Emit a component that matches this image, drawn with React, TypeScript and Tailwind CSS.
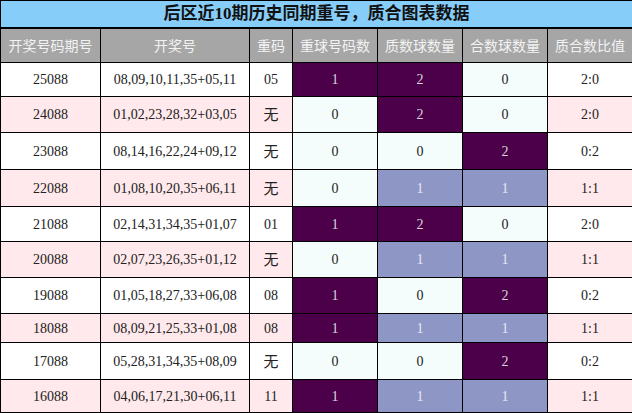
import React from "react";

type Row = {
  issue: string;
  draw: string;
  repeat: string;
  a: number;
  b: number;
  c: number;
  ratio: string;
  h: string;
};

const rows: Row[] = [
  { issue: "25088", draw: "08,09,10,11,35+05,11", repeat: "05", a: 1, b: 2, c: 0, ratio: "2:0", h: "h-[34px]" },
  { issue: "24088", draw: "01,02,23,28,32+03,05", repeat: "无", a: 0, b: 2, c: 0, ratio: "2:0", h: "h-[36px]" },
  { issue: "23088", draw: "08,14,16,22,24+09,12", repeat: "无", a: 0, b: 0, c: 2, ratio: "0:2", h: "h-[37px]" },
  { issue: "22088", draw: "01,08,10,20,35+06,11", repeat: "无", a: 0, b: 1, c: 1, ratio: "1:1", h: "h-[37px]" },
  { issue: "21088", draw: "02,14,31,34,35+01,07", repeat: "01", a: 1, b: 2, c: 0, ratio: "2:0", h: "h-[35px]" },
  { issue: "20088", draw: "02,07,23,26,35+01,12", repeat: "无", a: 0, b: 1, c: 1, ratio: "1:1", h: "h-[36px]" },
  { issue: "19088", draw: "01,05,18,27,33+06,08", repeat: "08", a: 1, b: 0, c: 2, ratio: "0:2", h: "h-[36px]" },
  { issue: "18088", draw: "08,09,21,25,33+01,08", repeat: "08", a: 1, b: 1, c: 1, ratio: "1:1", h: "h-[29px]" },
  { issue: "17088", draw: "05,28,31,34,35+08,09", repeat: "无", a: 0, b: 0, c: 2, ratio: "0:2", h: "h-[37px]" },
  { issue: "16088", draw: "04,06,17,21,30+06,11", repeat: "11", a: 1, b: 1, c: 1, ratio: "1:1", h: "h-[33px]" },
];

const headers = ["开奖号码期号", "开奖号", "重码", "重球号码数", "质数球数量", "合数球数量", "质合数比值"];

function countCell(v: number, isFirst: boolean) {
  let cls = "bg-[#f5fdfc] text-[#222]";
  if (isFirst ? v >= 1 : v === 2) cls = "bg-[#4b0049] text-[#d9d4dc]";
  else if (v === 1) cls = "bg-[#8e96c6] text-[#e8e9f2]";
  return (
    <td className={`border border-black text-center ${cls}`}>{v}</td>
  );
}

export default function App() {
  return (
    <div className="w-[632px] h-[413px] bg-white font-['Liberation_Serif','Noto_Sans_CJK_SC',serif]">
      <table className="w-[632px] table-fixed border-collapse text-[14px]">
        <colgroup>
          <col className="w-[100px]" />
          <col className="w-[149px]" />
          <col className="w-[43px]" />
          <col className="w-[85px]" />
          <col className="w-[85px]" />
          <col className="w-[85px]" />
          <col className="w-[85px]" />
        </colgroup>
        <thead>
          <tr className="h-[27px]">
            <th
              colSpan={7}
              className="border border-black border-b-2 bg-[#87cdf9] text-[17px] font-bold text-[#111] leading-none"
            >
              后区近10期历史同期重号，质合图表数据
            </th>
          </tr>
          <tr className="h-[35px]">
            {headers.map((t) => (
              <th
                key={t}
                className="border border-black bg-[#a6a6a6] font-normal text-[#f2f2f2] font-['Noto_Sans_CJK_SC',sans-serif] text-[14px]"
              >
                {t}
              </th>
            ))}
          </tr>
        </thead>
        <tbody className="text-[#222]">
          {rows.map((r, i) => {
            const bg = i % 2 === 0 ? "bg-white" : "bg-[#ffe9ec]";
            return (
              <tr key={r.issue} className={r.h}>
                <td className={`border border-black text-center ${bg}`}>{r.issue}</td>
                <td className={`border border-black text-center ${bg}`}>{r.draw}</td>
                <td
                  className={`border border-black text-center ${bg} ${
                    r.repeat === "无" ? "font-['Noto_Sans_CJK_SC',sans-serif] text-[15px]" : ""
                  }`}
                >
                  {r.repeat}
                </td>
                {countCell(r.a, true)}
                {countCell(r.b, false)}
                {countCell(r.c, false)}
                <td className={`border border-black text-center ${bg}`}>{r.ratio}</td>
              </tr>
            );
          })}
        </tbody>
      </table>
    </div>
  );
}
